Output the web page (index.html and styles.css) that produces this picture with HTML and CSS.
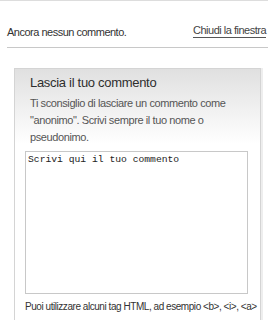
FILE: index.html
```html
<!DOCTYPE html>
<html lang="it">
<head>
    <meta charset="UTF-8">
    <title>Commenti</title>
    <link rel="stylesheet" href="styles.css">
</head>
<body>
    <div id="comments">
        <div class="bar">
            <span class="empty">Ancora nessun commento.</span>
            <a href="#" class="close">Chiudi la finestra</a>
        </div>

        <div class="form-box">
            <h3>Lascia il tuo commento</h3>
            <p class="note">Ti sconsiglio di lasciare un commento come "anonimo". Scrivi sempre il tuo nome o pseudonimo.</p>
            <textarea class="comment-text">Scrivi qui il tuo commento</textarea>
            <p class="tags">Puoi utilizzare alcuni tag HTML, ad esempio &lt;b&gt;, &lt;i&gt;, &lt;a&gt;</p>
        </div>
    </div>
</body>
</html>
```

FILE: styles.css
```css
body {
    margin: 0;
    font-family: "Liberation Sans", Arial, sans-serif;
    color: #333;
    background: #fff;
    overflow: hidden;
}

#comments {
    width: 268px;
    border-top: 1px solid #ddd;
}

.bar {
    margin: 0 0 0 7px;
    padding: 23px 2px 9px 0;
    display: flex;
    justify-content: space-between;
    align-items: flex-end;
    border-bottom: 1px solid #c8c8c8;
    font-size: 11px;
    letter-spacing: -0.5px;
}

.empty {
    color: #333;
}

.close {
    color: #444;
    text-decoration: none;
    border-bottom: 1px solid #555;
    padding-bottom: 1px;
}

.form-box {
    box-sizing: border-box;
    margin: 20px 0 0 14px;
    width: 247px;
    min-height: 270px;
    padding: 6px 10px 0 10px;
    border: 1px solid #d4d4d4;
    box-shadow: 2px 0 0 #eee;
    background: linear-gradient(#e0e0e0, #fff 75px);
}

.form-box h3 {
    margin: 0 0 0 5px;
    font-size: 13px;
    font-weight: normal;
    letter-spacing: -0.3px;
    color: #2e2e2e;
}

.note {
    margin: 5px 0 0 5px;
    font-size: 11px;
    line-height: 17px;
    letter-spacing: -0.4px;
    color: #555;
}

.comment-text {
    display: block;
    box-sizing: border-box;
    margin: 5px 0 0 0;
    width: 223px;
    height: 143px;
    padding: 2px;
    border: 1px solid #c8c8c8;
    font-family: "Liberation Mono", "Courier New", monospace;
    font-size: 9.7px;
    color: #222;
    resize: none;
}

.tags {
    margin: 7px 0 0 0;
    font-size: 10px;
    letter-spacing: -0.45px;
    color: #333;
    white-space: nowrap;
}
```
